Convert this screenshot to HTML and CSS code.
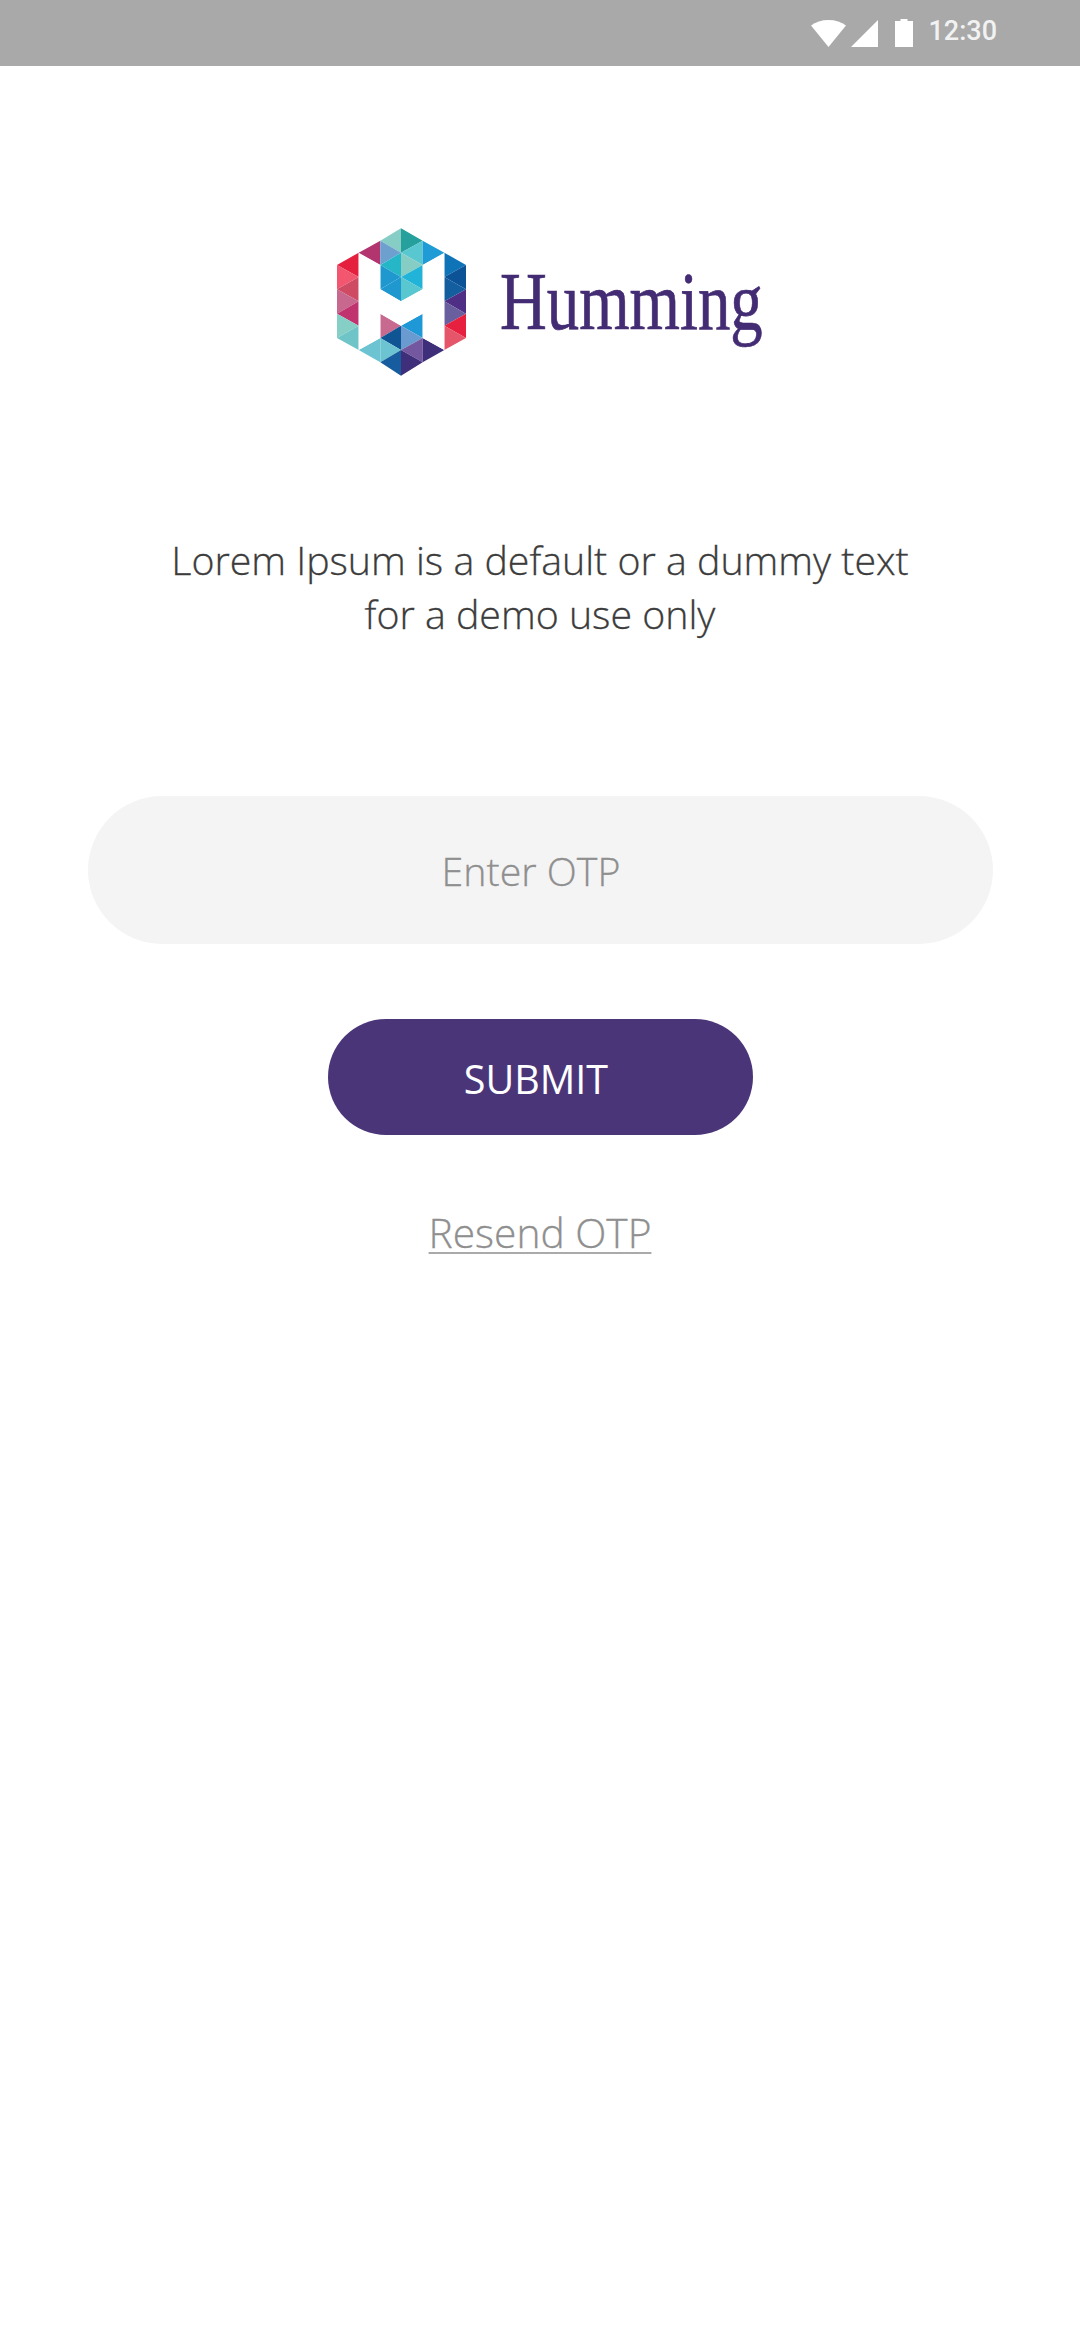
FILE: index.html
```html
<!DOCTYPE html>
<html>
<head>
    <title>Verify OTP</title>
    <link rel="stylesheet" href="styles.css">
</head>
<body>
    <div class="status-bar">
        <svg class="status-wifi" width="35" height="27" viewBox="0 0 35 27">
            <path d="M0 5.5C4.5 2 10.7 0 17.5 0S30.500 2 35 5.500L17.500 27z" fill="#fff"/>
        </svg>
        <svg class="status-signal" width="27" height="27" viewBox="0 0 27 27">
            <path d="M0 27L27 0V27z" fill="#fff"/>
        </svg>
        <svg class="status-battery" width="18" height="28" viewBox="0 0 18 28">
            <path d="M5.500 0H12.500V2H18V28H0V2H5.500z" fill="#fff"/>
        </svg>
        <span class="status-time">12:30</span>
    </div>

    <div class="logo">
        <svg class="logo-mark" width="129" height="148" viewBox="80 55 387 442">
            <!-- left edge -->
            <polygon points="80,165 145,128 145,201" fill="#e5203f"/>
            <polygon points="80,165 145,201 80,238" fill="#f2576f"/>
            <polygon points="80,238 145,201 145,274" fill="#cf4a63"/>
            <polygon points="80,238 145,274 80,311" fill="#c8688f"/>
            <polygon points="80,311 145,274 145,347" fill="#c0336f"/>
            <polygon points="80,311 145,347 80,384" fill="#85cfc6"/>
            <polygon points="80,384 145,347 145,420" fill="#6fc4c8"/>
            <polygon points="145,128 210,92 210,165" fill="#b2356f"/>
            <polygon points="145,420 210,384 210,457" fill="#6cc4d2"/>
            <!-- middle left -->
            <polygon points="210,92 272,55 272,128" fill="#85cdc5"/>
            <polygon points="210,92 272,128 210,165" fill="#6d9fcf"/>
            <polygon points="210,165 272,128 272,201" fill="#25b7c8"/>
            <polygon points="210,165 272,201 210,238" fill="#1f98d0"/>
            <polygon points="210,238 272,201 272,274" fill="#1f98d0"/>
            <polygon points="210,311 272,347 210,384" fill="#c86a90"/>
            <polygon points="210,384 272,347 272,420" fill="#0f5594"/>
            <polygon points="210,384 272,420 210,457" fill="#6cc4d2"/>
            <polygon points="210,457 272,420 272,497" fill="#175c9e"/>
            <!-- middle right -->
            <polygon points="272,55 337,92 272,128" fill="#25a09c"/>
            <polygon points="272,128 337,92 337,165" fill="#58c7d0"/>
            <polygon points="272,128 337,165 272,201" fill="#85cdc5"/>
            <polygon points="272,201 337,165 337,238" fill="#22b4d8"/>
            <polygon points="272,201 337,238 272,274" fill="#58c7cf"/>
            <polygon points="272,347 337,311 337,384" fill="#1f98d8"/>
            <polygon points="272,347 337,384 272,420" fill="#6a9bd0"/>
            <polygon points="272,420 337,384 337,457" fill="#74589f"/>
            <polygon points="272,420 337,457 272,497" fill="#3f2e79"/>
            <!-- right edge -->
            <polygon points="337,92 402,128 337,165" fill="#1f9bd5"/>
            <polygon points="337,384 402,420 337,457" fill="#3f2e79"/>
            <polygon points="402,128 467,165 402,201" fill="#0f73b8"/>
            <polygon points="402,201 467,165 467,238" fill="#0b5396"/>
            <polygon points="402,201 467,238 402,274" fill="#135e9e"/>
            <polygon points="402,274 467,238 467,311" fill="#4f2f85"/>
            <polygon points="402,274 467,311 402,347" fill="#6a5f9e"/>
            <polygon points="402,347 467,311 467,384" fill="#e8203f"/>
            <polygon points="402,347 467,384 402,420" fill="#e5566b"/>
            <!-- H cut out -->
            <polygon points="145,130 210,165 210,238 272,274 337,238 337,165 402,130 402,420 337,384 337,311 272,347 210,311 210,384 145,420" fill="#fff"/>
        </svg>
        <span class="logo-name">Humming</span>
    </div>

    <p class="intro">Lorem Ipsum is a default or a dummy text<br>for a demo use only</p>

    <form class="otp-form">
        <input class="otp-input" type="text" placeholder="Enter OTP">
        <button class="otp-submit" type="button">SUBMIT</button>
        <a class="otp-resend" href="#">Resend OTP</a>
    </form>
</body>
</html>
```

FILE: styles.css
```css
body {
    font-family: "Open Sans", sans-serif;
    margin: 0;
    padding: 0;
    background-color: #ffffff;
}

.status-bar {
    height: 66px;
    background-color: #a9a9a9;
    display: flex;
    align-items: center;
    justify-content: flex-end;
    padding-right: 83px;
}

.status-wifi {
    margin-right: 5px;
}

.status-signal {
    margin-right: 17px;
}

.status-battery {
    margin-right: 15px;
}

.status-time {
    font-family: Roboto, sans-serif;
    font-weight: 500;
    font-size: 27px;
    line-height: 27px;
    margin-top: -3px;
    color: #f2f2f2;
}

.logo {
    display: flex;
    align-items: center;
    height: 148px;
    padding-top: 162px;
    padding-left: 337px;
}

.logo-name {
    font-family: "Liberation Serif", serif;
    font-size: 82px;
    line-height: 148px;
    color: #432c73;
    margin-left: 34px;
    transform: scaleX(0.79);
    transform-origin: left center;
    -webkit-text-stroke: 0.7px #432c73;
}

.intro {
    margin: 0;
    padding-top: 157px;
    text-align: center;
    font-size: 39.3px;
    font-weight: 300;
    line-height: 54px;
    color: #3c3c3c;
    -webkit-text-stroke: 0.3px #3c3c3c;
}

.otp-form {
    display: flex;
    flex-direction: column;
    align-items: center;
    padding-top: 155px;
}

.otp-input {
    width: 905px;
    height: 148px;
    box-sizing: border-box;
    border: none;
    border-radius: 74px;
    background-color: #f4f4f4;
    padding: 2px 18px 0 0;
    text-align: center;
    font-family: inherit;
    font-size: 39.3px;
    font-weight: 300;
    color: #8f8f8f;
    -webkit-text-stroke: 0.3px #8f8f8f;
}

.otp-input::placeholder {
    color: #8f8f8f;
    opacity: 1;
}

.otp-submit {
    width: 425px;
    height: 116px;
    margin-top: 75px;
    border: none;
    border-radius: 58px;
    background-color: #4b3579;
    color: #ffffff;
    padding: 4px 8px 0 0;
    font-family: inherit;
    font-size: 39.5px;
    font-weight: 400;
}

.otp-resend {
    margin-top: 70px;
    font-size: 40.7px;
    font-weight: 300;
    line-height: 54px;
    color: #8f8f8f;
    -webkit-text-stroke: 0.3px #8f8f8f;
    text-decoration-color: #aaaaaa;
    text-decoration-thickness: 2px;
    text-underline-offset: 4px;
}
```
